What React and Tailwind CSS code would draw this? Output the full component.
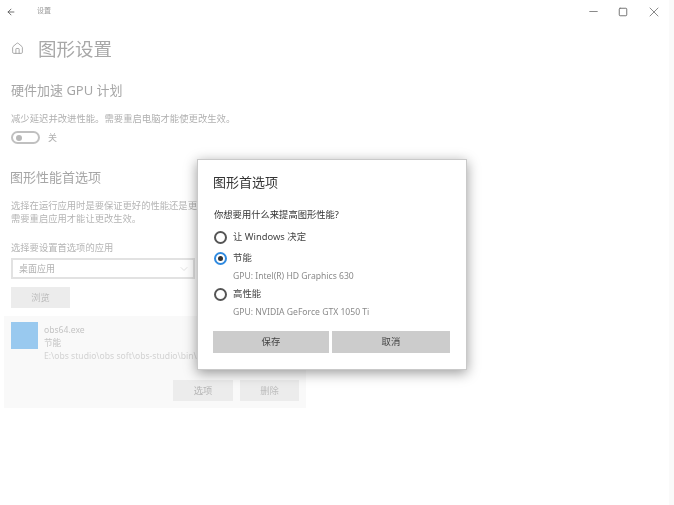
import React from 'react';
import { ArrowLeft, Home, ChevronDown, Minus, Square, X } from 'lucide-react';

const font = { fontFamily: '"Noto Sans", "Noto Sans CJK SC", sans-serif' };

const Radio = ({ checked, label, gpu }) => (
  <div>
    <div className="flex items-center h-[21px] gap-[6px]">
      {checked ? (
        <span className="w-[13px] h-[13px] rounded-full border-2 border-[#2f8ae0] flex items-center justify-center">
          <span className="w-[5px] h-[5px] rounded-full bg-[#333333]"></span>
        </span>
      ) : (
        <span className="w-[13px] h-[13px] rounded-full border-2 border-[#555555]"></span>
      )}
      <span className="text-[9.4px] text-[#444444]">{label}</span>
    </div>
    {gpu && <p className="pl-[19px] text-[8.6px] leading-[15px] text-[#8a8a8a]">{gpu}</p>}
  </div>
);

const GraphicsDialog = () => (
  <div className="absolute left-[197px] top-[159px] w-[270px] h-[211px] bg-white border border-[#c9c9c9] shadow-[0_3px_12px_rgba(0,0,0,0.4)] px-[16px]">
    <h2 className="text-[13px] leading-[18px] text-[#333333] mt-[13px] -ml-[1px]">图形首选项</h2>
    <p className="text-[9.3px] leading-[14px] text-[#333333] mt-[17px]">你想要用什么来提高图形性能?</p>
    <div className="mt-[5px] flex flex-col">
      <Radio label="让 Windows 决定" />
      <Radio checked label="节能" gpu="GPU: Intel(R) HD Graphics 630" />
      <Radio label="高性能" gpu="GPU: NVIDIA GeForce GTX 1050 Ti" />
    </div>
    <div className="flex gap-[3px] mt-[11px] -ml-[1px] w-[237px]">
      <button className="w-[116px] h-[22px] bg-[#cccccc] text-[9.4px] text-[#444444]">保存</button>
      <button className="w-[118px] h-[22px] bg-[#cccccc] text-[9.4px] text-[#444444]">取消</button>
    </div>
  </div>
);

export default function App() {
  return (
    <div className="relative w-[674px] h-[505px] bg-white overflow-hidden blur-[0.4px]" style={font}>
      <div className="flex h-full">
        <main className="w-[669px] h-full">
          {/* title bar */}
          <header className="flex items-center h-[23px] pl-[6px] pr-[7px]">
            <ArrowLeft className="w-[10px] h-[10px] text-[#555555]" />
            <span className="ml-[21px] text-[7px] text-[#9a9a9a]">设置</span>
            <div className="ml-auto flex items-center gap-[18px] text-[#777777]">
              <Minus className="w-[13px] h-[13px]" strokeWidth={1.6} />
              <Square className="w-[10px] h-[10px]" strokeWidth={2.4} />
              <X className="w-[16px] h-[16px]" strokeWidth={1.3} />
            </div>
          </header>

          <div className="pl-[11px] text-[#a3a3a3]">
            <div className="flex items-center h-[51px]">
              <Home className="w-[13px] h-[13px] text-[#999999]" strokeWidth={1.5} />
              <h1 className="ml-[14px] text-[18.5px] text-[#a8a8a8]">图形设置</h1>
            </div>

            <h2 className="mt-[7px] text-[13px] leading-[18px] text-[#a6a6a6]">硬件加速 GPU 计划</h2>
            <p className="mt-[13px] text-[9.35px] leading-[14px] text-[#b0b0b0]">减少延迟并改进性能。需要重启电脑才能使更改生效。</p>
            <div className="flex items-center mt-[5px] h-[13px]">
              <span className="w-[29px] h-[13px] rounded-full border-2 border-[#c0c0c0] flex items-center pl-[3px]">
                <span className="w-[6px] h-[6px] rounded-full bg-[#b8b8b8]"></span>
              </span>
              <span className="ml-[8px] text-[9px] text-[#b0b0b0]">关</span>
            </div>

            <h2 className="mt-[24px] -ml-[1px] text-[13px] leading-[18px] text-[#a6a6a6]">图形性能首选项</h2>
            <p className="mt-[13px] text-[9.3px] leading-[13px] text-[#b5b5b5] whitespace-nowrap">选择在运行应用时是要保证更好的性能还是更长的电池使用时间。</p>
            <p className="text-[9.3px] leading-[13px] text-[#b5b5b5]">需要重启应用才能让更改生效。</p>

            <p className="mt-[16px] text-[9.3px] leading-[14px] text-[#b5b5b5]">选择要设置首选项的应用</p>
            <div className="mt-[3px] w-[184px] h-[21px] border-2 border-[#e2e2e2] flex items-center pl-[6px] pr-[3px]">
              <span className="text-[9px] text-[#b0b0b0]">桌面应用</span>
              <ChevronDown className="ml-auto w-[12px] h-[12px] text-[#cfcfcf]" strokeWidth={1.25} />
            </div>
            <button className="block mt-[8px] w-[59px] h-[21px] bg-[#ececec] text-[9.3px] text-[#bdbdbd]">浏览</button>

            <section className="mt-[8px] -ml-[7px] w-[302px] h-[92px] bg-[#f9f9f9] pl-[7px] pt-[6px]">
              <div className="flex">
                <div className="w-[27px] h-[27px] bg-[#99c9ef]"></div>
                <div className="ml-[6px] text-[8.6px] leading-[13px] text-[#c4c4c4] pt-[2px] whitespace-nowrap">
                  <p>obs64.exe</p>
                  <p>节能</p>
                  <p className="text-[#d2d2d2]">E:\obs studio\obs soft\obs-studio\bin\64bit\obs64.exe</p>
                </div>
              </div>
              <div className="flex gap-[7px] mt-[17px] pl-[162px]">
                <button className="w-[60px] h-[21px] bg-[#ececec] text-[9.3px] text-[#b5b5b5]">选项</button>
                <button className="w-[59px] h-[21px] bg-[#ececec] text-[9.3px] text-[#bdbdbd]">删除</button>
              </div>
            </section>
          </div>
        </main>
        <aside className="w-[5px] h-full bg-[#fafafa]"></aside>
      </div>
      <GraphicsDialog />
    </div>
  );
}
